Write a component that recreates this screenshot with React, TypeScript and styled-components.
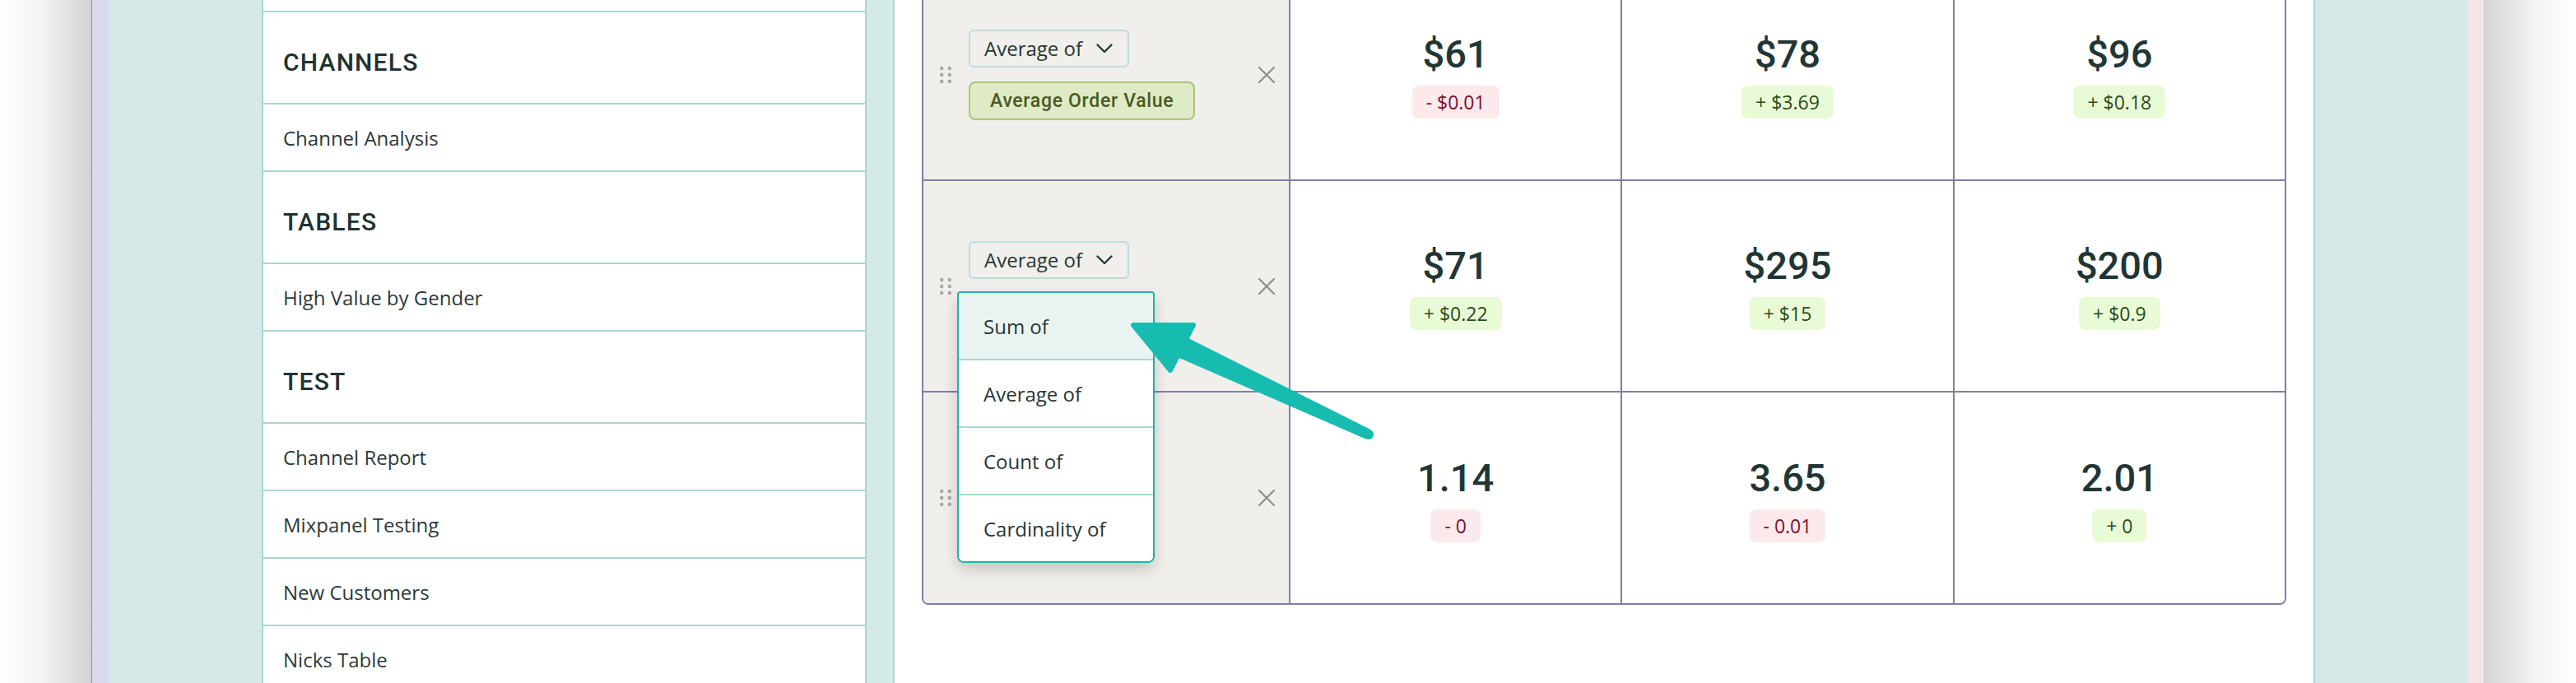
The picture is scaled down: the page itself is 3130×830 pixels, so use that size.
import React from 'react';
import styled, { createGlobalStyle } from 'styled-components';

type Delta = { text: string; up: boolean };
type Cell = { value: string; delta: Delta };
type Row = { field?: string; open?: boolean; cells: Cell[] };

const sidebar: { kind: 'head' | 'item'; label: string }[] = [
    { kind: 'item', label: '' },
    { kind: 'head', label: 'CHANNELS' },
    { kind: 'item', label: 'Channel Analysis' },
    { kind: 'head', label: 'TABLES' },
    { kind: 'item', label: 'High Value by Gender' },
    { kind: 'head', label: 'TEST' },
    { kind: 'item', label: 'Channel Report' },
    { kind: 'item', label: 'Mixpanel Testing' },
    { kind: 'item', label: 'New Customers' },
    { kind: 'item', label: 'Nicks Table' },
];

const rows: Row[] = [
    {
        field: 'Average Order Value',
        cells: [
            { value: '$61', delta: { text: '- $0.01', up: false } },
            { value: '$78', delta: { text: '+ $3.69', up: true } },
            { value: '$96', delta: { text: '+ $0.18', up: true } },
        ],
    },
    {
        open: true,
        cells: [
            { value: '$71', delta: { text: '+ $0.22', up: true } },
            { value: '$295', delta: { text: '+ $15', up: true } },
            { value: '$200', delta: { text: '+ $0.9', up: true } },
        ],
    },
    {
        cells: [
            { value: '1.14', delta: { text: '- 0', up: false } },
            { value: '3.65', delta: { text: '- 0.01', up: false } },
            { value: '2.01', delta: { text: '+ 0', up: true } },
        ],
    },
];

const aggregations = ['Sum of', 'Average of', 'Count of', 'Cardinality of'];

const DragHandle = () => (
    <svg width="14" height="20" viewBox="0 0 14 20">
        {[2, 10, 18].map((y) => (
            <g key={y} fill="#a6a6a6">
                <circle cx="2.2" cy={y} r="2.2" />
                <circle cx="11.8" cy={y} r="2.2" />
            </g>
        ))}
    </svg>
);

const Chevron = () => (
    <svg width="20" height="12" viewBox="0 0 20 12">
        <polyline points="1.5,1.5 10,10 18.5,1.5" fill="none" stroke="#283634" strokeWidth="2.4" strokeLinecap="round" strokeLinejoin="round" />
    </svg>
);

const CloseIcon = () => (
    <svg width="20" height="20" viewBox="0 0 20 20">
        <path d="M1 1 L19 19 M19 1 L1 19" stroke="#8d8d8d" strokeWidth="2.2" strokeLinecap="round" />
    </svg>
);

const Pointer = () => (
    <ArrowLayer width="3130" height="830" viewBox="0 0 3130 830">
        <g fill="#17bcb1" stroke="#17bcb1" strokeLinejoin="round">
            <polygon points="1377,395 1450,395 1422,450" strokeWidth="6" />
            <polygon points="1418,428 1431,405 1665.5,522.6 1660.5,533.4" strokeWidth="1" />
            <circle cx="1663" cy="528" r="6" strokeWidth="0" />
        </g>
    </ArrowLayer>
);

const App: React.FC = () => {
    return (
        <Page>
            <GlobalStyle />
            <Shade side="left" />
            <Window>
                <FrameEdge tone="#ddd9ed" />
                <Workspace>
                    <Sidebar>
                        {sidebar.map((s, i) =>
                            s.kind === 'head'
                                ? <SideHeader key={i}>{s.label}</SideHeader>
                                : <SideItem key={i}>{s.label}</SideItem>
                        )}
                    </Sidebar>
                    <Main>
                        <Table>
                            {rows.map((row, i) => (
                                <TableRow key={i} last={i === rows.length - 1}>
                                    <LabelCell>
                                        <DragHandle />
                                        <Controls>
                                            <Dropdown>
                                                <span>Average of</span>
                                                <Chevron />
                                            </Dropdown>
                                            {row.field ? <FieldChip>{row.field}</FieldChip> : <FieldSlot />}
                                        </Controls>
                                        <CloseButton><CloseIcon /></CloseButton>
                                        {row.open && (
                                            <Menu>
                                                {aggregations.map((a, j) => (
                                                    <MenuItem key={a} active={j === 0} last={j === aggregations.length - 1}>{a}</MenuItem>
                                                ))}
                                            </Menu>
                                        )}
                                    </LabelCell>
                                    {row.cells.map((c, j) => (
                                        <ValueCell key={j}>
                                            <Value>{c.value}</Value>
                                            <Badge up={c.delta.up}>{c.delta.text}</Badge>
                                        </ValueCell>
                                    ))}
                                </TableRow>
                            ))}
                        </Table>
                    </Main>
                </Workspace>
                <FrameEdge tone="#f4e5e7" />
            </Window>
            <Shade side="right" />
            <Pointer />
        </Page>
    );
};

export default App;

const GlobalStyle = createGlobalStyle`
    html, body {
        margin:0;
        padding:0;
        background:#ffffff;
    }
    body {
        width:3130px;
        height:830px;
        overflow:hidden;
        font-family:'Open Sans', sans-serif;
    }
    * { box-sizing:border-box; }
`
const Page = styled.div`
    position:relative;
    display:flex;
    width:3130px;
    height:830px;
    overflow:hidden;
`
const ArrowLayer = styled.svg`
    position:absolute;
    left:0;
    top:0;
    pointer-events:none;
    z-index:10;
`
const Shade = styled.div<{ side: 'left' | 'right' }>`
    width:112px;
    flex-shrink:0;
    background:${(p) => p.side === 'left'
        ? 'linear-gradient(to right, #ffffff 0%, #f4f4f4 45%, #d2d2d2 100%)'
        : 'linear-gradient(to left, #ffffff 0%, #f4f4f4 45%, #d4d4d4 100%)'};
    border-${(p) => (p.side === 'left' ? 'right' : 'left')}:1px solid ${(p) => (p.side === 'left' ? '#8f8f8f' : '#d0d0d0')};
`
const Window = styled.div`
    flex:1;
    display:flex;
`
const FrameEdge = styled.div<{ tone: string }>`
    width:20px;
    flex-shrink:0;
    background:${(p) => p.tone};
`
const Workspace = styled.div`
    flex:1;
    display:flex;
    gap:32px;
    padding:0 185px 0 186px;
    background:#d5e9e8;
`
const Sidebar = styled.div`
    width:735px;
    flex-shrink:0;
    margin-top:-67px;
    background:#ffffff;
    border-left:2px solid #a9d6d2;
    border-right:2px solid #a9d6d2;
`
const SideHeader = styled.div`
    height:112px;
    display:flex;
    align-items:center;
    padding:10px 0 0 24px;
    border-bottom:2px solid #a9d6d2;
    font-family:'Roboto', sans-serif;
    font-weight:500;
    font-size:30px;
    letter-spacing:1.2px;
    color:#1f3230;
`
const SideItem = styled.div`
    height:82px;
    display:flex;
    align-items:center;
    padding-left:24px;
    border-bottom:2px solid #a9d6d2;
    font-size:24px;
    color:#2a3937;
`
const Main = styled.div`
    width:1728px;
    flex-shrink:0;
    background:#ffffff;
    border-left:2px solid #a9d6d2;
    border-right:2px solid #a9d6d2;
    padding:0 33px;
`
const Table = styled.div`
    margin-top:-37px;
    border:2px solid #7f7fa6;
    border-top:none;
    border-radius:0 0 8px 8px;
    overflow:hidden;
`
const TableRow = styled.div<{ last: boolean }>`
    display:grid;
    grid-template-columns:444px 1fr 1fr 1fr;
    height:${(p) => (p.last ? '256px' : '257px')};
    border-bottom:${(p) => (p.last ? 'none' : '2px solid #7f7fa6')};
`
const LabelCell = styled.div`
    position:relative;
    display:flex;
    align-items:center;
    padding:0 17px 0 20px;
    background:#f0efeb;
`
const Controls = styled.div`
    display:flex;
    flex-direction:column;
    align-items:flex-start;
    margin-left:21px;
`
const Dropdown = styled.div`
    width:195px;
    height:46px;
    display:flex;
    align-items:center;
    justify-content:space-between;
    padding:0 18px 0 17px;
    border:2px solid #bcdcd9;
    border-radius:6px;
    font-size:24px;
    color:#283634;
`
const FieldChip = styled.div`
    margin-top:17px;
    height:47px;
    display:flex;
    align-items:center;
    padding:0 24px;
    background:#dfeac6;
    border:2px solid #a9c772;
    border-radius:8px;
    font-family:'Roboto', sans-serif;
    font-weight:500;
    font-size:23px;
    letter-spacing:0.7px;
    color:#4a5a1f;
`
const FieldSlot = styled.div`
    margin-top:17px;
    height:47px;
`
const CloseButton = styled.div`
    margin-left:auto;
    display:flex;
`
const Menu = styled.div`
    position:absolute;
    top:134px;
    left:41px;
    width:240px;
    z-index:5;
    background:#ffffff;
    border:2px solid #1db4aa;
    border-radius:4px 4px 8px 8px;
    box-shadow:0 8px 18px rgba(0, 0, 0, 0.18);
    overflow:hidden;
`
const MenuItem = styled.div<{ active: boolean; last: boolean }>`
    height:${(p) => (p.last ? '80px' : '82px')};
    display:flex;
    align-items:center;
    padding-left:30px;
    background:${(p) => (p.active ? '#e9f4f2' : '#ffffff')};
    border-bottom:${(p) => (p.last ? 'none' : '2px solid #a9d8d4')};
    font-size:24px;
    color:#283634;
`
const ValueCell = styled.div`
    display:flex;
    flex-direction:column;
    align-items:center;
    justify-content:center;
    padding-top:5px;
    border-left:2px solid #7f7fa6;
    background:#ffffff;
`
const Value = styled.div`
    font-family:'Roboto', sans-serif;
    font-weight:500;
    font-size:47px;
    line-height:1;
    color:#213634;
`
const Badge = styled.div<{ up: boolean }>`
    margin-top:15px;
    height:40px;
    line-height:40px;
    padding:0 17px;
    border-radius:8px;
    font-size:23px;
    background:${(p) => (p.up ? '#e9fbd6' : '#fce9ec')};
    color:${(p) => (p.up ? '#2a4a17' : '#7c0f2c')};
`
